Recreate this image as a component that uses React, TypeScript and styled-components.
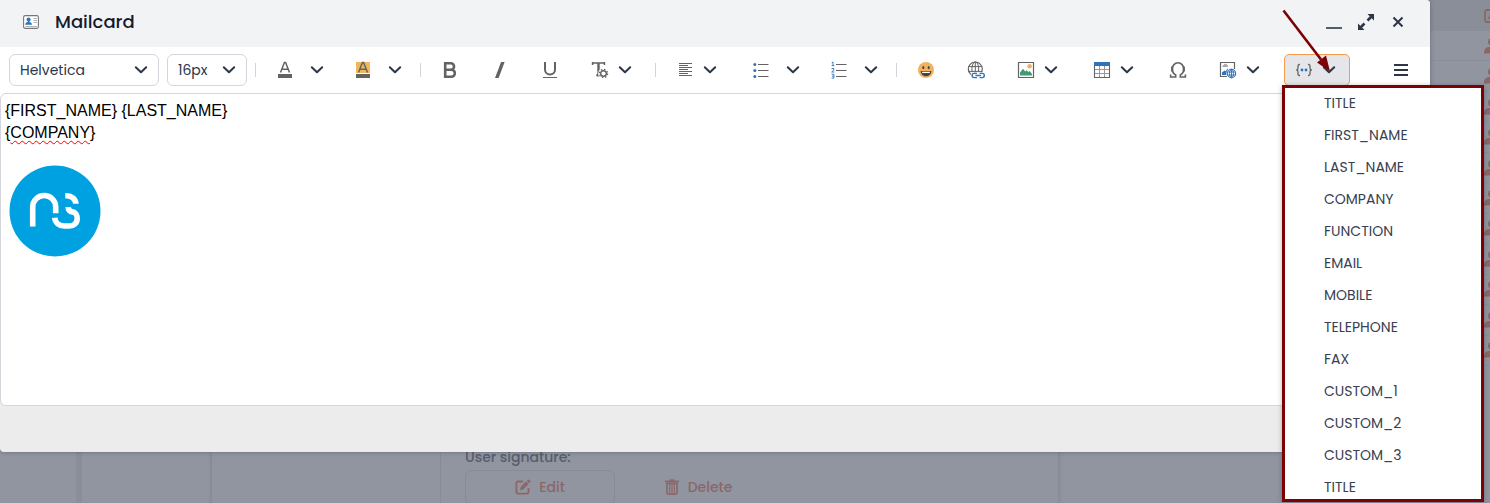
import React from "react";
import styled, { createGlobalStyle } from "styled-components";

const GlobalStyle = createGlobalStyle`
  *, *::before, *::after { box-sizing: border-box; }
  body {
    margin: 0;
    background: #9095a0;
    color: #2b3648;
    font-family: Poppins, Inter, "Open Sans", sans-serif;
    font-size: 14px;
  }
  button, select { font: inherit; color: inherit; }
`;

const Screen = styled.div`
  position: relative;
  min-height: 100vh;
  overflow: hidden;
`;

/* ---------- dimmed page behind the dialog ---------- */

const Backdrop = styled.div`
  display: flex;
  min-height: 100vh;
`;

const Rail = styled.div`
  width: 82px;
  border-right: 6px solid #898e99;
`;

const SideNav = styled.div`
  width: 130px;
  border-right: 1px solid #868b96;
  box-shadow: inset -3px 0 3px -2px #858a95;
`;

const SubNav = styled.div`
  width: 229px;
  border-right: 1px solid #878c97;
`;

const Form = styled.div`
  display: flex;
  flex-direction: column;
  gap: 3px;
  flex: 1;
  padding: 447px 24px 0;
  color: #565d6d;
  box-shadow: 2px 0 3px #858a95;
`;

const FormLabel = styled.div`
  font-weight: 500;
  line-height: 20px;
`;

const FormActions = styled.div`
  display: flex;
  gap: 8px;
`;

const GhostButton = styled.button<{ $outlined?: boolean }>`
  display: flex;
  align-items: center;
  justify-content: center;
  gap: 8px;
  width: 150px;
  height: 34px;
  padding: 0;
  border: 1px solid ${(p) => (p.$outlined ? "#858b98" : "transparent")};
  border-radius: 6px;
  background: none;
  color: #8b6768;
  font-weight: 500;
`;

const Contacts = styled.div`
  width: 432px;
`;

const ContactsHead = styled.div`
  display: flex;
  align-items: center;
  justify-content: flex-end;
  height: 31px;
  background: #898e99;
  color: #8b6768;
`;

const ContactRows = styled.div`
  display: flex;
  flex-direction: column;
  height: 335px;
`;

const ContactRow = styled.div`
  display: flex;
  flex: 1;
  align-items: center;
  justify-content: flex-end;
  border-bottom: 1px solid #898e9a;
  color: #8b6768;
`;

const Overhang = styled.span`
  display: flex;
  margin-right: -12px;
`;

/* ---------- dialog ---------- */

const Dialog = styled.section`
  position: absolute;
  top: 0;
  left: 0;
  right: 60px;
  border-radius: 0 4px 4px 4px;
  background: #ececec;
  box-shadow: 0 0 4px rgba(60, 65, 80, 0.5);
`;

const TitleBar = styled.header`
  display: flex;
  align-items: center;
  height: 47px;
  padding: 0 16px 3px 23px;
  border-radius: 0 4px 0 0;
  background: #f2f3f5;
`;

const Title = styled.h1`
  flex: 1;
  margin: 0 0 0 16px;
  padding-bottom: 2px;
  color: #131b2e;
  font-size: 18px;
  font-weight: 500;
`;

const WindowButton = styled.button`
  display: flex;
  align-items: center;
  justify-content: center;
  width: 32px;
  height: 32px;
  padding: 0;
  border: 0;
  background: none;
`;

const Toolbar = styled.div`
  display: flex;
  align-items: center;
  gap: 10px;
  height: 46px;
  padding: 0 9px;
  background: #fff;
`;

const Selects = styled.div`
  display: flex;
  gap: 8px;
  margin-right: -1px;
`;

const SelectBox = styled.label<{ $width: number }>`
  display: grid;
  align-items: center;
  width: ${(p) => p.$width}px;

  & > * { grid-area: 1 / 1; }
  & > svg { justify-self: end; margin-right: 11px; pointer-events: none; }
`;

const Select = styled.select`
  width: 100%;
  height: 32px;
  padding: 0 10px;
  border: 1px solid #d5d6dd;
  border-radius: 6px;
  background: #fff;
  appearance: none;
`;

const Separator = styled.span`
  width: 1px;
  height: 14px;
  margin: 0 -1px;
  background: #d2d4dc;
`;

const widths = { plain: 40, drop: 66, split: 68 };

const Tool = styled.button<{ $kind: keyof typeof widths; $active?: boolean }>`
  display: flex;
  align-items: center;
  justify-content: space-between;
  width: ${(p) => widths[p.$kind]}px;
  height: 32px;
  padding: 0 ${(p) => (p.$kind === "drop" ? 13 : p.$kind === "split" ? 8 : 10)}px 0 10px;
  border: 1px solid ${(p) => (p.$active ? "#f79a4b" : "transparent")};
  border-radius: 5px;
  background: ${(p) => (p.$active ? "#e5e6ea" : "transparent")};

  & > svg { flex: none; }
`;

const MenuAnchor = styled.div`
  position: relative;
  z-index: 1;
`;

const Menu = styled.ul`
  position: absolute;
  top: 31px;
  left: -2px;
  width: 202px;
  height: 417px;
  margin: 0;
  padding: 0;
  overflow: hidden;
  list-style: none;
  border: 3px solid #7b0204;
  background: #fff;
  box-shadow: 0 1px 5px rgba(40, 45, 60, 0.35);
`;

const MenuItem = styled.button`
  display: block;
  width: 100%;
  height: 32px;
  padding: 0 0 2px 39px;
  border: 0;
  background: none;
  color: #374151;
  text-align: left;
`;

const Arrow = styled.svg`
  position: absolute;
  top: -46px;
  left: -3px;
  pointer-events: none;
`;

const Spacer = styled.span`
  flex: 1;
`;

const Editor = styled.div`
  min-height: 313px;
  padding: 6px 4px;
  border: 1px solid #d5d6dc;
  border-radius: 6px;
  background: #fff;
  color: #000;
  font-family: "Liberation Sans", Arial, sans-serif;
  font-size: 16px;
  line-height: 22px;
  outline: none;
`;

const EditorWrap = styled.div`
  background: linear-gradient(#fff 50%, #ececec 50%);
`;

const Line = styled.p`
  margin: 0;
`;

const Misspelt = styled.span`
  text-decoration: underline wavy #f00 1px;
  text-underline-offset: 2px;
  text-decoration-skip-ink: none;
`;

const Logo = styled.svg`
  display: block;
  margin: 21px 0 0 4px;
`;

const Footer = styled.footer`
  height: 46px;
`;

/* ---------- icons ---------- */

const G = "#636363";
const B = "#2f73b8";

const Svg = ({ s = 18, children }: { s?: number; children: React.ReactNode }) => (
  <svg width={s} height={s} viewBox={`0 0 ${s} ${s}`} fill="none" aria-hidden="true">
    {children}
  </svg>
);

const Chevron = () => (
  <svg width="14" height="14" viewBox="0 0 14 14" fill="none" aria-hidden="true">
    <path d="M1.8 4.2 7 9.2l5.2-5" stroke="#2b3648" strokeWidth="2" strokeLinecap="round" strokeLinejoin="round" />
  </svg>
);

const LetterA = ({ highlight }: { highlight?: boolean }) => (
  <Svg>
    {highlight && <path d="M2 1h14v11H2z" fill="#f0b75c" />}
    <path d="M4.500 11.500 8.400 1.500h1.200l3.900 10M6 8.200h6" stroke={G} strokeWidth="1.500" />
    <path d="M2 13h14v4H2z" fill={G} />
  </Svg>
);

const Bold = () => (
  <Svg>
    <path d="M4.200 2.200h5.600a3.100 3.100 0 0 1 0 6.500H4.200zM4.200 8.700h6.100a3.500 3.500 0 0 1 0 7.100H4.200z" stroke={G} strokeWidth="2.600" />
  </Svg>
);
const Italic = () => (
  <Svg><path d="M10.100 1H13.600L7.600 17H4z" fill={G} /></Svg>
);
const Underline = () => (
  <Svg>
    <path d="M4 1v7.500a5 5 0 0 0 10 0V1" stroke={G} strokeWidth="2" />
    <path d="M2 16.500h14" stroke={G} strokeWidth="1" />
  </Svg>
);
const TextGear = () => (
  <Svg>
    <path d="M1 2h13M1.600 1v3M13.400 1v3" stroke={G} strokeWidth="1.600" />
    <path d="M7.500 2v12M5.400 14.200h3" stroke={G} strokeWidth="2.400" />
    <circle cx="12.500" cy="12.500" r="5.400" fill="#fff" />
    <circle cx="12.500" cy="12.500" r="2.800" stroke={G} strokeWidth="1.400" />
    <circle cx="12.500" cy="12.500" r="4.100" stroke={G} strokeWidth="1.300" strokeDasharray="1.500 1.720" />
  </Svg>
);
const AlignLeft = () => (
  <Svg>
    <path d="M3 2.500h13M3 4.500h9M3 6.500h13M3 8.500h9M3 10.500h13M3 12.500h9M3 14.500h13" stroke={G} strokeWidth="1" />
  </Svg>
);
const Bullets = () => (
  <Svg>
    <path d="M6 3.500h10.500M6 9.500h10.500M6 15.500h10.500" stroke={G} strokeWidth="1.200" />
    <circle cx="2.800" cy="3.500" r="1.500" fill={B} />
    <circle cx="2.800" cy="9.500" r="1.500" fill={B} />
    <circle cx="2.800" cy="15.500" r="1.500" fill={B} />
  </Svg>
);
const Numbers = () => (
  <Svg>
    <path d="M6 3.500h10.500M6 9.500h10.500M6 15.500h10.500" stroke={G} strokeWidth="1.200" />
    <path d="M1.700 1.800 3 1v3.600M1.600 4.600h2.800M1.600 7.500h2.200v1.600L1.700 11h2.600M1.600 13.300h2.300v3.800H1.600M2 15.200h1.800" stroke={B} strokeWidth=".9" />
  </Svg>
);
const Smile = () => (
  <Svg>
    <circle cx="9" cy="9" r="8" fill="#f0b260" />
    <ellipse cx="6.300" cy="6.600" rx="1" ry="1.600" fill="#444" />
    <ellipse cx="11.700" cy="6.600" rx="1" ry="1.600" fill="#444" />
    <path d="M3.600 10h10.800a5.400 5.200 0 0 1-10.800 0z" fill="#444" />
    <path d="M4.800 10.700h8.400l-.6 1.200H5.400z" fill="#fff" />
  </Svg>
);
const GlobeLink = () => (
  <Svg>
    <circle cx="8.300" cy="8" r="7" stroke={G} strokeWidth="1.200" />
    <ellipse cx="8.300" cy="8" rx="3.400" ry="7" stroke={G} strokeWidth="1" />
    <path d="M8.300 1v14M1.300 5.600h14M1.300 10.400h14" stroke={G} strokeWidth="1" />
    <path d="M4 11.200h14V18H4z" fill="#fff" />
    <path d="M10 12.400H7.200a2.100 2.100 0 0 0 0 4.200H10M12.600 12.400h2.600a2.100 2.100 0 0 1 0 4.200h-2.600M8.400 14.500h5.600" stroke={B} strokeWidth="1.400" />
  </Svg>
);
const Picture = () => (
  <Svg>
    <path d="M1.500 1.500h15v15h-15z" stroke={G} strokeWidth="1.200" fill="#fff" />
    <circle cx="12.600" cy="5.300" r="2.300" fill="#f0b260" />
    <path d="M3 14.600v-3l3-3.800 2.200 2.800 1.500-1.400 1.600 1.800 1.400-1 2.300 3v1.600z" fill="#3f9b73" />
  </Svg>
);
const TableIcon = () => (
  <Svg>
    <path d="M1.500 4.500h15v12h-15zM1.500 8.500h15M1.500 12.500h15M6.500 4.500v12M11.500 4.500v12" stroke="#999" strokeWidth="1" />
    <path d="M1.500 4.500v12h15v-12" stroke={G} strokeWidth="1.100" />
    <path d="M1 1h16v4H1z" fill={B} />
  </Svg>
);
const Omega = () => (
  <Svg>
    <path d="M1.600 13.400V16h5.100v-2.100C4.200 12.600 3.200 10.600 3.200 8a5.800 6.200 0 0 1 11.600 0c0 2.600-1 4.600-3.500 5.900V16h5.100v-2.600" stroke={G} strokeWidth="1.600" />
    <path d="M3.200 5.500v5M14.800 5.500v5" stroke={G} strokeWidth="2.200" />
  </Svg>
);
const PictureGlobe = () => (
  <Svg>
    <path d="M15.500 8V1.500h-14v14H8" stroke={G} strokeWidth="1.200" />
    <path d="M3.300 5.600a1.500 1.500 0 0 1 1.300-1.700 2 2 0 0 1 3.600 0 1.200 1.200 0 0 1 .3 2.200H4a1 1 0 0 1-.7-.5z" fill="#aaa" />
    <path d="M3 14v-2.500L5.500 9.500l1 .8L9 7.300V14z" fill={B} />
    <circle cx="12.500" cy="12.500" r="5.200" fill="#fff" />
    <circle cx="12.500" cy="12.500" r="4.200" stroke={B} strokeWidth="1.100" />
    <ellipse cx="12.500" cy="12.500" rx="2" ry="4.200" stroke={B} strokeWidth="1" />
    <path d="M12.500 8.300v8.400M8.800 11h7.400M8.800 14h7.400" stroke={B} strokeWidth=".9" />
  </Svg>
);
const Braces = () => (
  <Svg>
    <path d="M5 3.500H4.400a1.400 1.400 0 0 0-1.400 1.400v2.400C3 8.400 2.400 9 1.200 9c1.200 0 1.800.6 1.800 1.700v2.400a1.400 1.400 0 0 0 1.400 1.400H5M13 3.500h.6A1.400 1.400 0 0 1 15 4.900v2.400c0 1.100.6 1.700 1.800 1.700-1.200 0-1.800.6-1.800 1.700v2.400a1.400 1.400 0 0 1-1.400 1.400H13" stroke={G} strokeWidth="1.300" />
    <circle cx="7" cy="9" r="1.400" fill={B} />
    <circle cx="11" cy="9" r="1.400" fill={B} />
  </Svg>
);
const Hamburger = () => (
  <Svg><path d="M2 4h14M2 9h14M2 14h14" stroke="#2b3648" strokeWidth="2" /></Svg>
);
const CardIcon = () => (
  <Svg s={16}>
    <rect x=".6" y="1.600" width="14.800" height="12.800" rx="1.600" stroke="#777" strokeWidth="1.100" fill="#fff" />
    <circle cx="5.600" cy="5.400" r="2" fill={B} />
    <path d="M2.200 10.800c0-2 1.300-2.600 2.600-2.900V6.500h1.600v1.400c1.300.3 2.600.9 2.600 2.900z" fill={B} />
    <path d="M10.500 4.500H14M10.500 6.500H14M10.500 8.500H14M2.500 12.500H14" stroke="#aaa" strokeWidth=".9" />
  </Svg>
);
const Minimise = () => (
  <Svg><path d="M1 15h16" stroke="#2b3648" strokeWidth="1.600" /></Svg>
);
const Expand = () => (
  <Svg>
    <path d="M10.500 7.500 14 4M7.500 10.500 4 14" stroke="#2b3648" strokeWidth="2.600" />
    <path d="M10.500 1H17v6.500zM7.500 17H1v-6.500z" fill="#2b3648" />
  </Svg>
);
const Close = () => (
  <Svg><path d="m4.500 4.500 9 9M13.500 4.500l-9 9" stroke="#2b3648" strokeWidth="2" /></Svg>
);
const Pencil = () => (
  <Svg s={16}>
    <path d="M8 2.500H3.200A1.800 1.800 0 0 0 1.400 4.300v8.500a1.800 1.800 0 0 0 1.800 1.800h8.500a1.800 1.800 0 0 0 1.800-1.800V9" stroke="currentColor" strokeWidth="1.800" />
    <path d="m5 11.300.7-3.300L11 2.600 13.500 5.100 8.200 10.500zM11.800 1.800l.9-.9a1.200 1.200 0 0 1 1.700 0l.8.8a1.200 1.200 0 0 1 0 1.700l-.9.900z" fill="currentColor" />
  </Svg>
);
const Trash = () => (
  <Svg s={16}>
    <path d="M1 1.500h4.500L6.200.3h3.600l.7 1.200H15v2H1z" fill="currentColor" />
    <path d="M2.900 4.500v9.300a1.300 1.300 0 0 0 1.300 1.300h7.600a1.300 1.300 0 0 0 1.300-1.300V4.500z" stroke="currentColor" strokeWidth="1.700" />
    <path d="M5.700 5v9M8 5v9M10.300 5v9" stroke="currentColor" strokeWidth="1.200" />
  </Svg>
);
const Person = () => (
  <Svg>
    <circle cx="8" cy="5" r="4" fill="currentColor" />
    <path d="M0 16.500v-1.500a5 5 0 0 1 5-5h6a5 5 0 0 1 5 5v1.500z" fill="currentColor" />
  </Svg>
);
const Badge = () => (
  <Svg>
    <rect x="1" y="3" width="14" height="12" rx="2" stroke="currentColor" strokeWidth="1.800" />
    <path d="m4.500 12 3-6 3 6M5.500 10h4" stroke="currentColor" strokeWidth="1.400" />
  </Svg>
);

/* ---------- data ---------- */

type ToolSpec = { label: string; kind: keyof typeof widths; icon: React.ReactNode };

const toolGroups: ToolSpec[][] = [
  [
    { label: "Text color", kind: "split", icon: <LetterA /> },
    { label: "Background color", kind: "split", icon: <LetterA highlight /> },
  ],
  [
    { label: "Bold", kind: "plain", icon: <Bold /> },
    { label: "Italic", kind: "plain", icon: <Italic /> },
    { label: "Underline", kind: "plain", icon: <Underline /> },
    { label: "More formatting", kind: "drop", icon: <TextGear /> },
  ],
  [
    { label: "Alignment", kind: "drop", icon: <AlignLeft /> },
    { label: "Bulleted list", kind: "split", icon: <Bullets /> },
    { label: "Numbered list", kind: "split", icon: <Numbers /> },
  ],
  [
    { label: "Emoji", kind: "plain", icon: <Smile /> },
    { label: "Link", kind: "plain", icon: <GlobeLink /> },
    { label: "Image", kind: "drop", icon: <Picture /> },
    { label: "Table", kind: "drop", icon: <TableIcon /> },
    { label: "Special character", kind: "plain", icon: <Omega /> },
    { label: "Web image", kind: "drop", icon: <PictureGlobe /> },
  ],
];

const placeholders = [
  "TITLE", "FIRST_NAME", "LAST_NAME", "COMPANY", "FUNCTION", "EMAIL", "MOBILE",
  "TELEPHONE", "FAX", "CUSTOM_1", "CUSTOM_2", "CUSTOM_3", "TITLE",
];

export default function App() {
  return (
    <Screen>
      <GlobalStyle />
      <Backdrop>
        <Rail />
        <SideNav />
        <SubNav />
        <Form>
          <FormLabel>User signature:</FormLabel>
          <FormActions>
            <GhostButton $outlined><Pencil />Edit</GhostButton>
            <GhostButton><Trash />Delete</GhostButton>
          </FormActions>
        </Form>
        <Contacts>
          <ContactsHead><Overhang><Badge /></Overhang></ContactsHead>
          <ContactRows>
            {Array.from({ length: 11 }, (_, i) => (
              <ContactRow key={i}><Overhang><Person /></Overhang></ContactRow>
            ))}
          </ContactRows>
        </Contacts>
      </Backdrop>

      <Dialog role="dialog" aria-labelledby="dialog-title">
        <TitleBar>
          <CardIcon />
          <Title id="dialog-title">Mailcard</Title>
          <WindowButton aria-label="Minimise"><Minimise /></WindowButton>
          <WindowButton aria-label="Maximise"><Expand /></WindowButton>
          <WindowButton aria-label="Close"><Close /></WindowButton>
        </TitleBar>

        <Toolbar role="toolbar">
          <Selects>
            <SelectBox $width={150}>
              <Select aria-label="Font"><option>Helvetica</option></Select>
              <Chevron />
            </SelectBox>
            <SelectBox $width={80}>
              <Select aria-label="Font size"><option>16px</option></Select>
              <Chevron />
            </SelectBox>
          </Selects>
          {toolGroups.map((group, g) => (
            <React.Fragment key={g}>
              <Separator />
              {group.map((t) => (
                <Tool key={t.label} $kind={t.kind} aria-label={t.label}>
                  {t.icon}
                  {t.kind !== "plain" && <Chevron />}
                </Tool>
              ))}
            </React.Fragment>
          ))}
          <MenuAnchor>
            <Tool $kind="drop" $active aria-label="Placeholders" aria-expanded="true">
              <Braces />
              <Chevron />
            </Tool>
            <Menu>
              {placeholders.map((p, i) => (
                <li key={i}><MenuItem>{p}</MenuItem></li>
              ))}
            </Menu>
            <Arrow width="56" height="70" viewBox="0 0 56 70" aria-hidden="true">
              <path d="M2.500 2.500 40 51.500" stroke="#7b0204" strokeWidth="2.600" />
              <path d="M49 63.500 36 54.500 45 47.500z" fill="#7b0204" />
            </Arrow>
          </MenuAnchor>
          <Spacer />
          <Tool $kind="plain" aria-label="Menu"><Hamburger /></Tool>
        </Toolbar>

        <EditorWrap>
          <Editor contentEditable suppressContentEditableWarning spellCheck={false} role="textbox" aria-label="Signature">
            <Line>{"{FIRST_NAME} {LAST_NAME}"}</Line>
            <Line>{"{"}<Misspelt>COMPANY</Misspelt>{"}"}</Line>
            <Logo width="92" height="92" viewBox="0 0 92 92" role="img" aria-label="ns">
              <circle cx="46" cy="46" r="45.500" fill="#00a1e1" />
              <g stroke="#fff" strokeWidth="5.600" fill="none">
                <path d="M23.700 61.500V42a11.500 11.500 0 0 1 23 0v6.300" />
                <path d="M56.300 30.700h1.500a9 8 0 0 1 9 8" />
                <path d="M59.200 42c0 3.400 1.500 4.600 4.300 4.900 3 .3 4.700 3.200 4.700 6.300 0 5-3.300 7.800-8 7.800h-5c-5 0-9-3-9.500-8.200" />
              </g>
            </Logo>
          </Editor>
        </EditorWrap>
        <Footer />
      </Dialog>
    </Screen>
  );
}
